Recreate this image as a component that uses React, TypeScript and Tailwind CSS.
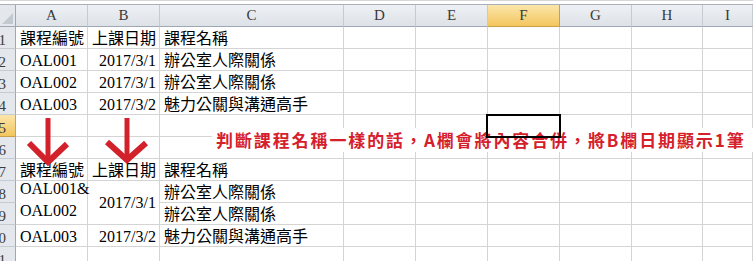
const cols = ['A', 'B', 'C', 'D', 'E', 'F', 'G', 'H', 'I']

const cellFont = { fontFamily: '"Liberation Serif", "Noto Sans CJK TC", serif' }

function RowHead({ n, active }: { n: number; active?: boolean }) {
  return (
    <div
      className={`overflow-hidden border-r border-b border-r-[#9ea7b3] ${
        active ? 'border-b-[#c9a04c] bg-gradient-to-b from-[#fbe6a8] to-[#f3c55c]' : 'border-b-[#c5cbd3] bg-[#e4e8ed]'
      }`}
    >
      <span
        className="-ml-[22px] inline-block w-[28px] text-right text-[15px] leading-[21px] text-[#3c3c3c]"
        style={cellFont}
      >
        {n}
      </span>
    </div>
  )
}

function Cell({
  children,
  right,
  className = '',
}: {
  children?: React.ReactNode
  right?: boolean
  className?: string
}) {
  return (
    <div
      className={`whitespace-nowrap border-r border-b border-[#d4d4d4] pt-[1px] text-[16px] leading-[22px] text-black ${
        right ? 'pr-[3px] text-right' : 'pl-[4px]'
      } ${className}`}
      style={cellFont}
    >
      {children}
    </div>
  )
}

function Blank({ n }: { n: number }) {
  return (
    <>
      {Array.from({ length: n }).map((_, i) => (
        <Cell key={i} />
      ))}
    </>
  )
}

export default function App() {
  return (
    <div className="relative h-[261px] w-[753px] overflow-hidden bg-white">
      {/* formula bar edge */}
      <div className="h-[5px] border-t border-b border-t-[#d6d6d6] border-b-[#a9b0b9] bg-white" />

      <div className="grid grid-cols-[16px_72px_72px_184px_72px_72px_72px_72px_71px_1fr] grid-rows-[22px_repeat(11,22px)]">
        {/* corner */}
        <div className="relative border-r border-b border-r-[#9ea7b3] border-b-[#9ea7b3] bg-[#e4e8ed]">
          <svg className="absolute right-[2px] bottom-[2px]" width="11" height="11" viewBox="0 0 11 11">
            <path d="M11 0 L11 11 L0 11 Z" fill="#c3c9d1" />
          </svg>
        </div>
        {cols.map((c) => (
          <div
            key={c}
            className={`flex items-center justify-center border-r border-b text-[15px] text-[#3a3a3a] ${
              c === 'F'
                ? 'border-r-[#c9a04c] border-b-[#c9a04c] bg-gradient-to-b from-[#fbe6a8] to-[#f3c55c]'
                : 'border-r-[#c5cbd3] border-b-[#9ea7b3] bg-gradient-to-b from-[#eef1f4] to-[#dde2e8]'
            }`}
            style={cellFont}
          >
            {c}
          </div>
        ))}

        {/* 1 */}
        <RowHead n={1} />
        <Cell>課程編號</Cell>
        <Cell>上課日期</Cell>
        <Cell>課程名稱</Cell>
        <Blank n={6} />

        {/* 2 */}
        <RowHead n={2} />
        <Cell>OAL001</Cell>
        <Cell right>2017/3/1</Cell>
        <Cell>辦公室人際關係</Cell>
        <Blank n={6} />

        {/* 3 */}
        <RowHead n={3} />
        <Cell>OAL002</Cell>
        <Cell right>2017/3/1</Cell>
        <Cell>辦公室人際關係</Cell>
        <Blank n={6} />

        {/* 4 */}
        <RowHead n={4} />
        <Cell>OAL003</Cell>
        <Cell right>2017/3/2</Cell>
        <Cell>魅力公關與溝通高手</Cell>
        <Blank n={6} />

        {/* 5, F5 is the active cell */}
        <RowHead n={5} active />
        <Blank n={5} />
        <div className="relative border-r border-b border-[#d4d4d4]">
          <div className="absolute -top-[1px] -left-[2px] z-20 h-[24px] w-[75px] border-2 border-black" />
        </div>
        <Blank n={3} />

        {/* 6 */}
        <RowHead n={6} />
        <Blank n={9} />

        {/* 7 */}
        <RowHead n={7} />
        <Cell>課程編號</Cell>
        <Cell>上課日期</Cell>
        <Cell>課程名稱</Cell>
        <Blank n={6} />

        {/* 8-9, A and B merged */}
        <RowHead n={8} />
        <Cell className="row-span-2 flex flex-col justify-end pb-[2px] leading-[19px]">
          <span>OAL001&amp;</span>
          <span>OAL002</span>
        </Cell>
        <Cell right className="row-span-2 flex items-center justify-end">
          2017/3/1
        </Cell>
        <Cell>辦公室人際關係</Cell>
        <Blank n={6} />

        <RowHead n={9} />
        <Cell>辦公室人際關係</Cell>
        <Blank n={6} />

        {/* 10 */}
        <RowHead n={10} />
        <Cell>OAL003</Cell>
        <Cell right>2017/3/2</Cell>
        <Cell>魅力公關與溝通高手</Cell>
        <Blank n={6} />

        {/* 11 */}
        <RowHead n={11} />
        <Blank n={9} />
      </div>

      {/* note text box */}
      <div
        className="absolute top-[128px] left-[212px] z-10 h-[24px] w-[541px] bg-white pl-[4px] text-[17px] font-bold leading-[24px] tracking-[1.9px] whitespace-nowrap text-[#d5202b]"
        style={{ fontFamily: '"Noto Sans CJK TC", "Noto Sans", sans-serif' }}
      >
        判斷課程名稱一樣的話，A欄會將內容合併，將B欄日期顯示1筆
      </div>

      {/* arrows */}
      <svg className="pointer-events-none absolute top-0 left-0 z-30" width="753" height="261" viewBox="0 0 753 261">
        <g stroke="#d3212b" fill="none" strokeLinejoin="miter">
          <line x1="48" y1="118" x2="48" y2="160" strokeWidth="5" />
          <polyline points="29,143 48,162 67,144" strokeWidth="6" />
          <line x1="127" y1="118" x2="127" y2="158" strokeWidth="5" />
          <polyline points="107,142 127,160 146,143" strokeWidth="6" />
        </g>
      </svg>
    </div>
  )
}
